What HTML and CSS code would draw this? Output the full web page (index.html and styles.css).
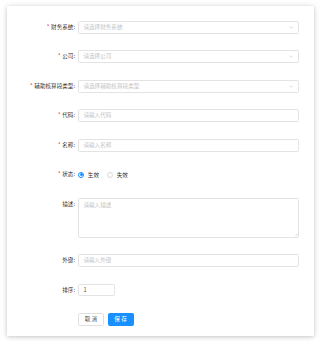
FILE: index.html
```html
<!DOCTYPE html>
<html lang="zh">
<head>
<meta charset="utf-8">
<link rel="stylesheet" href="styles.css">
</head>
<body>
<div class="page">
  <div class="card">
    <form class="form">
      <div class="row">
        <label class="label"><span class="req">*</span>财务系统:</label>
        <div class="control">
          <div class="select"><span class="ph">请选择财务系统</span>
            <svg class="arrow" viewBox="0 0 10 6"><path d="M1 1l4 4 4-4" fill="none" stroke="#bfbfbf" stroke-width="1.2"/></svg>
          </div>
        </div>
      </div>
      <div class="row">
        <label class="label"><span class="req">*</span>公司:</label>
        <div class="control">
          <div class="select"><span class="ph">请选择公司</span>
            <svg class="arrow" viewBox="0 0 10 6"><path d="M1 1l4 4 4-4" fill="none" stroke="#bfbfbf" stroke-width="1.2"/></svg>
          </div>
        </div>
      </div>
      <div class="row">
        <label class="label"><span class="req">*</span>辅助核算段类型:</label>
        <div class="control">
          <div class="select"><span class="ph">请选择辅助核算段类型</span>
            <svg class="arrow" viewBox="0 0 10 6"><path d="M1 1l4 4 4-4" fill="none" stroke="#bfbfbf" stroke-width="1.2"/></svg>
          </div>
        </div>
      </div>
      <div class="row">
        <label class="label"><span class="req">*</span>代码:</label>
        <div class="control"><div class="input"><span class="ph">请输入代码</span></div></div>
      </div>
      <div class="row">
        <label class="label"><span class="req">*</span>名称:</label>
        <div class="control"><div class="input"><span class="ph">请输入名称</span></div></div>
      </div>
      <div class="row">
        <label class="label"><span class="req">*</span>状态:</label>
        <div class="control radios">
          <span class="radio"><span class="dot checked"></span>生效</span>
          <span class="radio"><span class="dot"></span>失效</span>
        </div>
      </div>
      <div class="row">
        <label class="label">描述:</label>
        <div class="control">
          <div class="textarea"><span class="ph">请输入描述</span>
            <svg class="grip" viewBox="0 0 6 6"><path d="M5.5 1L1 5.5M5.5 3.5L3.5 5.5" stroke="#999" stroke-width="0.7"/></svg>
          </div>
        </div>
      </div>
      <div class="row">
        <label class="label">外键:</label>
        <div class="control"><div class="input"><span class="ph">请输入外键</span></div></div>
      </div>
      <div class="row">
        <label class="label">排序:</label>
        <div class="control"><div class="input short"><span class="val">1</span></div></div>
      </div>
      <div class="row">
        <span class="label"></span>
        <div class="control buttons">
          <button type="button" class="btn">取 消</button>
          <button type="button" class="btn primary">保 存</button>
        </div>
      </div>
    </form>
  </div>
</div>
</body>
</html>
```
FILE: styles.css
```css
html, body {
  margin: 0;
  padding: 0;
  background: #ffffff;
}
body {
  font-family: "Noto Sans CJK SC", "Noto Sans", sans-serif;
  font-size: 5.6px;
  color: rgba(0, 0, 0, 0.85);
}
.page {
  padding: 6px 8px 8px 7px;
}
.card {
  width: 307px;
  height: 330px;
  box-sizing: border-box;
  background: #fff;
  box-shadow: 0 1px 4px rgba(0, 0, 0, 0.18), 0 0 8px rgba(0, 0, 0, 0.07);
  padding: 15px 15px 0 0;
}
.form {
  display: flex;
  flex-direction: column;
  gap: 16.7px;
}
.row {
  display: grid;
  grid-template-columns: 71px 1fr;
  align-items: start;
}
.label {
  height: 12.8px;
  line-height: 12.8px;
  text-align: right;
  padding-right: 3px;
  white-space: nowrap;
  color: rgba(0, 0, 0, 0.85);
}
.req {
  color: #f5222d;
  margin-right: 1.6px;
}
.control {
  min-width: 0;
}
.select, .input, .textarea {
  box-sizing: border-box;
  height: 12.8px;
  border: 1px solid #e3e3e3;
  border-radius: 1.6px;
  background: #fff;
  padding: 0 4.4px;
  line-height: 10.8px;
  display: flex;
  align-items: center;
  justify-content: space-between;
}
.ph {
  color: #c4c4c4;
}
.val {
  color: rgba(0, 0, 0, 0.75);
}
.arrow {
  width: 4.4px;
  height: 2.8px;
  margin-right: 0.6px;
}
.short {
  width: 37.4px;
}
.textarea {
  height: 39.6px;
  align-items: flex-start;
  padding-top: 0.6px;
  position: relative;
}
.grip {
  position: absolute;
  right: 0.5px;
  bottom: 0.5px;
  width: 3px;
  height: 3px;
}
.radios {
  display: flex;
  align-items: center;
  height: 12.8px;
  gap: 8px;
}
.radio {
  display: flex;
  align-items: center;
  gap: 3.4px;
  color: rgba(0, 0, 0, 0.85);
}
.dot {
  box-sizing: border-box;
  width: 6.4px;
  height: 6.4px;
  border-radius: 50%;
  border: 1px solid #d9d9d9;
  background: #fff;
  display: flex;
  align-items: center;
  justify-content: center;
}
.dot.checked {
  border-color: #1890ff;
}
.dot.checked::after {
  content: "";
  width: 3.2px;
  height: 3.2px;
  border-radius: 50%;
  background: #1890ff;
}
.buttons {
  display: flex;
  gap: 3.6px;
}
.btn {
  box-sizing: border-box;
  width: 26px;
  height: 12.8px;
  padding: 0;
  border: 1px solid #e0e0e0;
  border-radius: 1.6px;
  background: #fff;
  font-family: inherit;
  font-size: 5.6px;
  line-height: 10.8px;
  color: rgba(0, 0, 0, 0.75);
  cursor: pointer;
}
.btn.primary {
  background: #1890ff;
  border-color: #1890ff;
  color: #fff;
}
```
